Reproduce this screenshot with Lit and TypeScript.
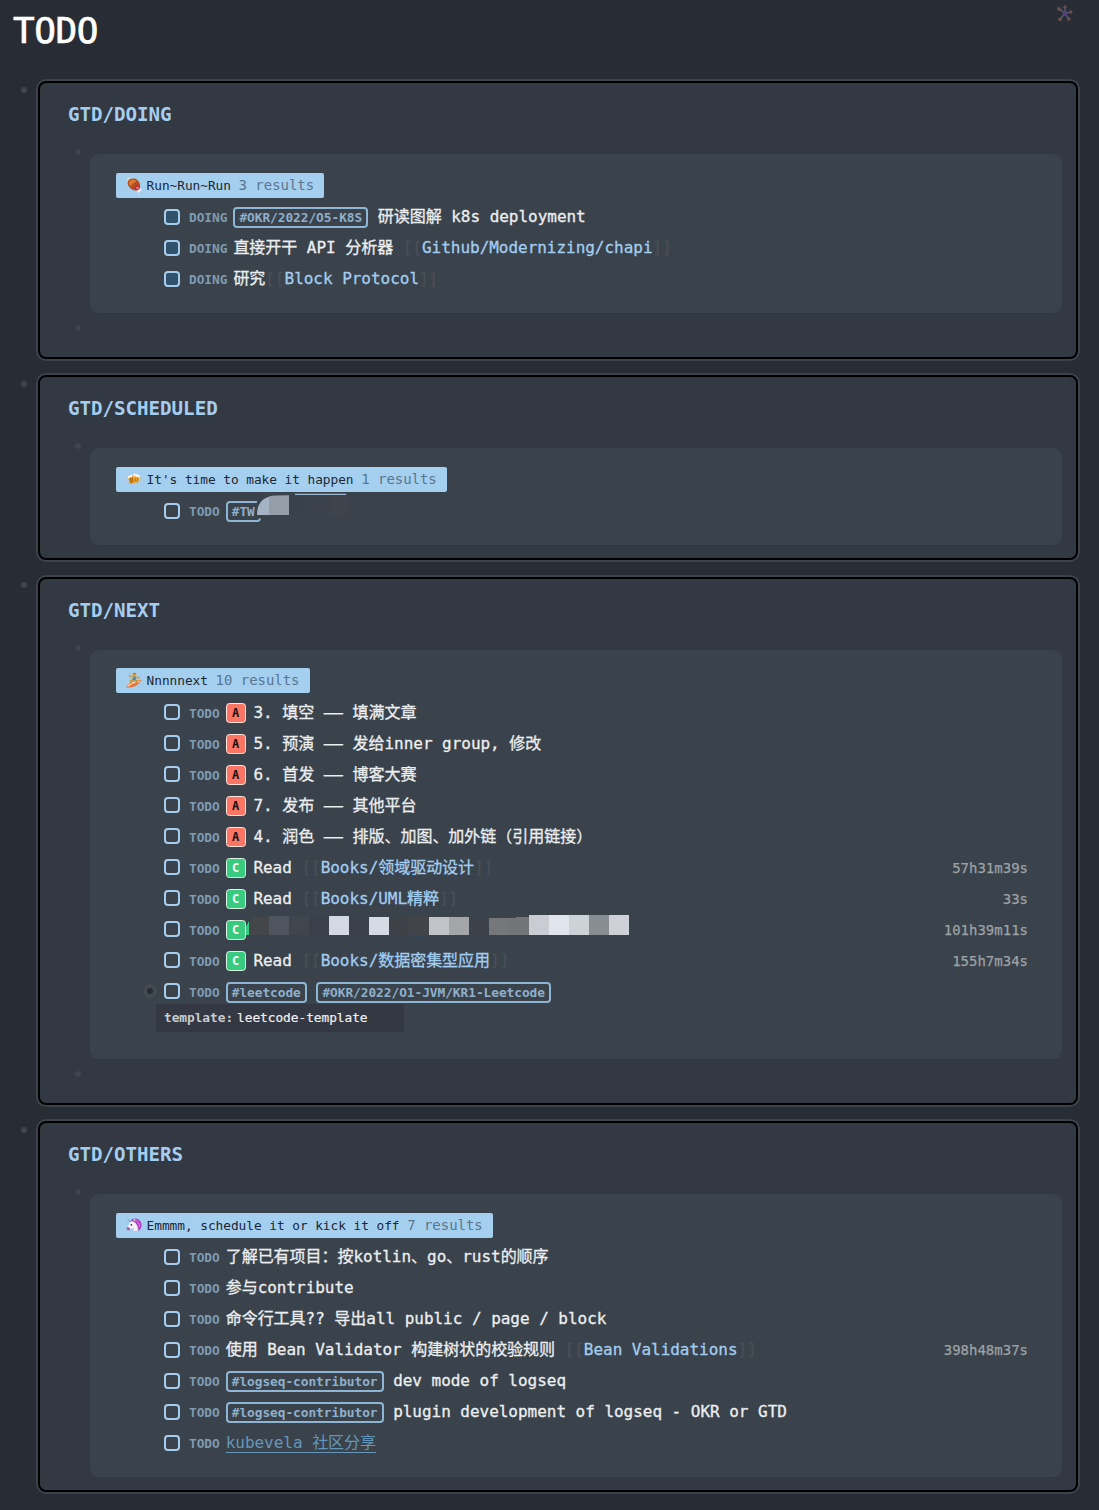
import { LitElement, html, css, svg, nothing, type TemplateResult } from "lit";
import { customElement, property } from "lit/decorators.js";

type Part =
  | { kind: "text" | "tag" | "ref" | "url"; text: string };

interface Task {
  state: "TODO" | "DOING";
  priority?: "A" | "C";
  parts: Part[];
  time?: string;
  mosaic?: "short" | "long";
  bullet?: boolean;
}

interface Section {
  title: string;
  icon: string;
  query: string;
  count: number;
  tasks: Task[];
  prop?: [string, string];
  trailing?: boolean;
  mod: string;
}

const t = (text: string): Part => ({ kind: "text", text });
const tag = (text: string): Part => ({ kind: "tag", text });
const ref = (text: string): Part => ({ kind: "ref", text });
const url = (text: string): Part => ({ kind: "url", text });

const SECTIONS: Section[] = [
  {
    title: "GTD/DOING", icon: "meat", query: "Run~Run~Run", count: 3, trailing: true, mod: "",
    tasks: [
      { state: "DOING", parts: [tag("#OKR/2022/O5-K8S"), t(" 研读图解 k8s deployment")] },
      { state: "DOING", parts: [t("直接开干 API 分析器 "), ref("Github/Modernizing/chapi")] },
      { state: "DOING", parts: [t("研究"), ref("Block Protocol")] },
    ],
  },
  {
    title: "GTD/SCHEDULED", icon: "beer", query: "It's time to make it happen", count: 1, mod: "spaced",
    tasks: [{ state: "TODO", parts: [tag("#TW")], mosaic: "short" }],
  },
  {
    title: "GTD/NEXT", icon: "surf", query: "Nnnnnext", count: 10, trailing: true, mod: "tight",
    prop: ["template:", "leetcode-template"],
    tasks: [
      { state: "TODO", priority: "A", parts: [t("3. 填空 —— 填满文章")] },
      { state: "TODO", priority: "A", parts: [t("5. 预演 —— 发给inner group, 修改")] },
      { state: "TODO", priority: "A", parts: [t("6. 首发 —— 博客大赛")] },
      { state: "TODO", priority: "A", parts: [t("7. 发布 —— 其他平台")] },
      { state: "TODO", priority: "A", parts: [t("4. 润色 —— 排版、加图、加外链（引用链接）")] },
      { state: "TODO", priority: "C", parts: [t("Read "), ref("Books/领域驱动设计")], time: "57h31m39s" },
      { state: "TODO", priority: "C", parts: [t("Read "), ref("Books/UML精粹")], time: "33s" },
      { state: "TODO", priority: "C", parts: [], time: "101h39m11s", mosaic: "long" },
      { state: "TODO", priority: "C", parts: [t("Read "), ref("Books/数据密集型应用")], time: "155h7m34s" },
      { state: "TODO", parts: [tag("#leetcode"), t(" "), tag("#OKR/2022/O1-JVM/KR1-Leetcode")], bullet: true },
    ],
  },
  {
    title: "GTD/OTHERS", icon: "unicorn", query: "Emmmm, schedule it or kick it off", count: 7, mod: "",
    tasks: [
      { state: "TODO", parts: [t("了解已有项目：按kotlin、go、rust的顺序")] },
      { state: "TODO", parts: [t("参与contribute")] },
      { state: "TODO", parts: [t("命令行工具?? 导出all public / page / block")] },
      { state: "TODO", parts: [t("使用 Bean Validator 构建树状的校验规则 "), ref("Bean Validations")], time: "398h48m37s" },
      { state: "TODO", parts: [tag("#logseq-contributor"), t(" dev mode of logseq")] },
      { state: "TODO", parts: [tag("#logseq-contributor"), t(" plugin development of logseq - OKR or GTD")] },
      { state: "TODO", parts: [url("kubevela 社区分享")] },
    ],
  },
];

const ICONS: Record<string, TemplateResult> = {
  meat: svg`
    <path d="M2.5 2.5 L13 13.5" stroke="#f0e4da" stroke-width="2"/>
    <circle cx="1.6" cy="2.6" r="1" fill="#e9d9cc"/><circle cx="2.8" cy="1.5" r="1" fill="#e9d9cc"/>
    <circle cx="14.2" cy="12.9" r="1.3" fill="#e6eaee"/><circle cx="12.7" cy="14.4" r="1.3" fill="#e6eaee"/>
    <path d="M1.8 4.8 C2.6 1.6 8.2 .4 11.4 3 C14.4 5.6 15 10.6 13 12.4 C10.4 14.6 6 13.2 3.6 10.4 C1.8 8.4 1.4 6.6 1.8 4.8Z" fill="#b4501f"/>
    <path d="M3.4 4.6 C5.2 2.2 9 2.2 10.6 4.4 C8.6 4.6 5.8 6.6 4.8 9.4 C3.2 7.8 2.6 6 3.4 4.6Z" fill="#dc7a32"/>
    <ellipse cx="11" cy="10.4" rx="3.2" ry="2.1" transform="rotate(-48 11 10.4)" fill="#c62f3c"/>
    <ellipse cx="11.5" cy="10.9" rx="1.1" ry=".8" fill="#f0b4ae"/>`,
  beer: svg`
    <path d="M2 6 L7 4.6 L9 11.6 L4 13Z" fill="#e28d17"/>
    <path d="M8 4.4 L13.6 5.6 L12 12 L7 10.8Z" fill="#eda52a"/>
    <path d="M2.4 7.4 C.2 8.2 1.2 11.4 3.4 10.8" fill="none" stroke="#dcc193" stroke-width="1"/>
    <path d="M13.4 7 C15.6 7.6 14.8 10.6 12.6 10" fill="none" stroke="#dcc193" stroke-width="1"/>
    <path d="M4.2 7.4 L5.2 11.8 M6 6.8 L7 11" stroke="#a45c0c" stroke-width=".9"/>
    <path d="M9.8 7 L9.2 10.6 M11.8 7.4 L11 11" stroke="#b66c10" stroke-width=".9"/>
    <circle cx="3" cy="6" r="1.3" fill="#fff3dd"/><circle cx="5.2" cy="5" r="1.3" fill="#fff8ea"/>
    <circle cx="8.6" cy="4" r="1.4" fill="#fff6e4"/><circle cx="11" cy="4.6" r="1.4" fill="#fffaf0"/><circle cx="13" cy="5.4" r="1.1" fill="#fff3dd"/>`,
  surf: svg`
    <path d="M.4 15.2 C2 10.4 9 7.6 15.2 8 C13.6 12.8 5.8 16.6 .4 15.2Z" fill="#e8703a"/>
    <path d="M1.8 14.2 C4.6 11.4 9.4 9.8 13.8 9.2" fill="none" stroke="#f9d9b0" stroke-width="1.4"/>
    <path d="M7.2 4.6 L10 4.2 L9.8 8.2 L6.6 8.4Z" fill="#55808c"/>
    <path d="M7 7.6 L4.6 9.2 L5.2 11.6 M9 7.8 L11 9.2 L9.8 11" fill="none" stroke="#c99238" stroke-width="1.8"/>
    <path d="M7.6 5.4 L4.4 4.6 L3 3 M9.6 5 L12.2 6 L14.2 5" fill="none" stroke="#d5a040" stroke-width="1.6"/>
    <circle cx="8.4" cy="2.6" r="1.9" fill="#d9a23c"/><path d="M6.6 2.2 Q8.2 .2 10.2 1.8Z" fill="#8a6a30"/>`,
  unicorn: svg`
    <path d="M.8 1 L5.4 5 L4 6Z" fill="#79a9b8"/>
    <path d="M4.6 3.6 C7.4 0 13.4 1 15 5.2 C16.2 8.4 15.2 12.6 12.4 14 C13 10.6 10.4 6 4.6 3.6Z" fill="#b13fc4"/>
    <path d="M7.4 2.6 C11 2.4 13.4 6 13.4 10" fill="none" stroke="#e583dd" stroke-width="1"/>
    <path d="M4 5.4 C6 3.6 9.6 5 10.6 7.8 C11.4 9.8 11.8 12 11 14 L6.8 13.8 C8 12.8 8.2 11.6 7.6 10.8 C6 11.2 4.6 12.6 2.6 13 C1 13.2 .4 11.6 1.2 10.4 C2.6 8.6 3 7 4 5.4Z" fill="#f6f2f6"/>
    <path d="M.6 11 C1.6 9.2 3.8 10 4.4 12.4 C2.8 14 .2 13.6 .6 11Z" fill="#a45cb4"/>
    <circle cx="5.4" cy="7.8" r=".85" fill="#3c2c44"/>
    <path d="M7.6 3.6 L8.6 2 L9.4 4.6Z" fill="#f6f2f6"/>`,
};

/* x, top, width, colour of each censor block; every block ends at y = 22 of the row */
const LONG: [number, number, number, string][] = [
  [3, 4, 20, "#454649"], [23, 3, 20, "#4f555f"], [43, 3, 20, "#3f464e"], [63, 4, 20, "#3a3f49"],
  [83, 3, 20, "#d3d9e3"], [103, 4, 20, "#3b414a"], [123, 4, 20, "#d5dae4"], [143, 4, 20, "#3e4147"],
  [163, 4, 20, "#434449"], [183, 4, 20, "#c0c3c8"], [203, 4, 20, "#a3a5a9"], [223, 4, 20, "#3b424a"],
  [243, 4, 20, "#75777b"], [263, 4, 20, "#727478"], [283, 2, 20, "#c9ccd2"], [303, 2, 20, "#dfe4ed"],
  [323, 2, 20, "#cdd1d8"], [343, 2, 20, "#878d92"], [363, 2, 20, "#ced2d8"],
];

@customElement("task-row")
export class TaskRow extends LitElement {
  static styles = css`
    :host { display: flex; position: relative; height: 31px; box-sizing: border-box; padding-left: 48px; white-space: pre; }
    .box { flex: none; width: 16px; height: 16px; margin-top: 8px; box-sizing: border-box; border: 2px solid #a7cdee; border-radius: 4px; }
    .box.doing { background: #30526b; }
    .state { margin-left: 9px; margin-right: 6px; margin-top: var(--nudge, 0px); font-size: 12.8px; font-weight: 700; line-height: 33px; color: #7f9bb3; letter-spacing: -0.03px; }
    .prio { flex: none; width: 20px; height: 20px; box-sizing: border-box; margin: 7px 7.7px 0 0; border: 1px solid #ffe3dd; border-radius: 3.5px;
      font-size: 12px; font-weight: 700; line-height: 18px; text-align: center; background: #fb7565; color: #14100f; }
    .prio.c { background: #38cb80; border-color: #d9f7e4; color: #f5fff8; }
    .text, .ref, .url { margin-top: var(--nudge, 0px); line-height: 31px; letter-spacing: -0.03px; -webkit-text-stroke: 0.3px currentColor; }
    .text { color: #eceef0; }
    .tag { height: 21px; box-sizing: border-box; margin-top: calc(6px + var(--nudge, 0px)); padding: 0 4px; border: 2px solid #8fb5d4; border-radius: 4px;
      font-size: 12.8px; font-weight: 700; line-height: 17px; color: #8fb0cc; letter-spacing: -0.03px; }
    .ref { color: #a3cdf0; }
    .br { color: #4a4f57; }
    .url { height: 25px; color: #6596ba; border-bottom: 1px solid #6596ba; -webkit-text-stroke-width: 0; }
    .time { margin-left: auto; margin-top: var(--nudge, 0px); font-size: 14px; line-height: 33px; color: #9da2a7; -webkit-text-stroke: 0.25px currentColor; }
    .dot { position: absolute; left: 27px; top: 9px; width: 14px; height: 14px; border-radius: 50%; background: #434950; }
    .dot::after { content: ""; position: absolute; left: 4px; top: 4px; width: 6px; height: 6px; border-radius: 50%; background: #272b33; }
    .mosaic { position: absolute; left: 130px; top: 0; width: 390px; height: 31px; overflow: visible; }
  `;

  @property({ attribute: false }) task!: Task;

  private part(p: Part) {
    if (p.kind === "tag") return html`<span class="tag">${p.text}</span>`;
    if (p.kind === "url") return html`<span class="url">${p.text}</span>`;
    if (p.kind === "ref")
      return html`<span class="ref"><span class="br">[[</span>${p.text}<span class="br">]]</span></span>`;
    return html`<span class="text">${p.text}</span>`;
  }

  private mosaic(kind: "short" | "long") {
    if (kind === "long")
      return html`<svg class="mosaic" viewBox="0 0 390 31" shape-rendering="crispEdges">
        <path d="M0 14 L3 8 V22 H0Z" fill="#38cb80"/>
        ${LONG.map(([x, y, w, c], i) =>
          i === 0
            ? svg`<path d="M3 22 V12 Q4 4 12 4 H23 V22Z" fill=${c}/>`
            : svg`<rect x=${x} y=${y} width=${w} height=${22 - y} fill=${c}/>`)}
        <path d="M243 2 H283 Q276 4.8 262 4.8 H243Z" fill="#3a434b"/>
        <rect x="161" y="22" width="20" height="5" fill="#36475a" opacity=".45"/>
      </svg>`;
    return html`<svg class="mosaic" viewBox="0 0 390 31">
      <rect x="11" y="5" width="8" height="18.5" fill="#3a434b"/>
      <path d="M11 20 Q11 3 27 1 V20Z" fill="#a4b4c4"/>
      <path d="M23 1.4 Q28 .3 43 .3 V20 H23Z" fill="#959da8"/>
      <rect x="43" y="1" width="20" height="19" fill="#39414a"/>
      <rect x="63" y="1" width="20" height="19" fill="#3c424b"/>
      <rect x="83" y="1" width="20" height="19" fill="#3f434c"/>
      <path d="M49 -.6 H100" stroke="#9fbcd4" stroke-width="1.1"/>
    </svg>`;
  }

  render() {
    const k = this.task;
    return html`
      ${k.bullet ? html`<span class="dot"></span>` : nothing}
      <span class="box ${k.state.toLowerCase()}"></span>
      <span class="state">${k.state}</span>
      ${k.priority ? html`<span class="prio ${k.priority.toLowerCase()}">${k.priority}</span>` : nothing}
      ${k.parts.map((p) => this.part(p))}
      ${k.mosaic ? this.mosaic(k.mosaic) : nothing}
      ${k.time ? html`<span class="time">${k.time}</span>` : nothing}
    `;
  }
}

@customElement("app-root")
export class AppRoot extends LitElement {
  static styles = css`
    :host { display: block; position: relative; box-sizing: border-box; min-height: 1510px; background: #282c35;
      font-family: "DejaVu Sans Mono", "Noto Sans CJK SC", monospace; font-size: 16px; color: #eceef0; }
    .title { margin: 0; height: 81px; padding: 8px 0 0 13px; box-sizing: border-box; font-size: 36px; font-weight: 400; line-height: 46px;
      color: #fff; letter-spacing: -0.4px; -webkit-text-stroke: 0.7px currentColor; }
    .star { position: absolute; left: 1056px; top: 5px; width: 17px; height: 17px; }
    .block { display: grid; grid-template-columns: 38px 1040px; margin-bottom: 16px; }
    .block.spaced { margin-bottom: 17px; }
    .bullet { width: 6px; height: 6px; border-radius: 50%; background: #40454e; margin: 6px 0 0 21px; }
    .card { box-sizing: border-box; padding: 0 14px 13px 28px; border: 2px solid #000; border-radius: 8px; background: #333943; box-shadow: 0 0 0 2px #3d434b; }
    .card h2 { margin: 0; height: 66px; padding-top: 18px; box-sizing: border-box; font-size: 19.2px; line-height: 27px; font-weight: 700;
      color: #a5cdef; letter-spacing: -0.04px; }
    .child { display: grid; grid-template-columns: 22px 1fr; }
    .inner { width: 6px; height: 6px; border-radius: 50%; background: #3d444c; margin: 0 0 0 7px; }
    .panel { margin-top: 5px; padding: 19px 34px 19px 26px; border-radius: 9px; background: #3a434b; }
    .tight { --nudge: 1px; }
    .tight .bullet { margin-top: 5px; }
    .tight .panel { padding: 18px 34px 27px 26px; }
    .badge { display: flex; width: max-content; height: 25px; padding: 0 10px; margin-bottom: 3px; border-radius: 2px; background: #a5cfef;
      font-size: 12.8px; line-height: 25px; color: #1c2733; letter-spacing: -0.04px; white-space: pre; }
    .emoji { width: 16px; height: 16px; margin: 4px 4.6px 0 0; }
    .count { font-size: 14px; color: #587690; }
    .prop { display: flex; gap: 4px; width: 248px; height: 28px; box-sizing: border-box; margin: -2px 0 0 40px; padding-left: 8px; background: #333842;
      font-size: 12.8px; line-height: 27px; letter-spacing: -0.03px; color: #eef0f2; -webkit-text-stroke: 0.2px currentColor; }
    .key { font-weight: 700; color: #c9cccf; -webkit-text-stroke-width: 0; }
    .tail { height: 31px; padding-top: 12px; box-sizing: border-box; }
  `;

  private section(s: Section) {
    return html`<section class="block ${s.mod}">
      <div class="bullet"></div>
      <div class="card">
        <h2>${s.title}</h2>
        <div class="child">
          <div class="inner"></div>
          <div class="panel">
            <div class="badge"><svg class="emoji" viewBox="0 0 16 16">${ICONS[s.icon]}</svg><span>${s.query} </span><span class="count">${s.count} results</span></div>
            ${s.tasks.map((k) => html`<task-row .task=${k}></task-row>`)}
            ${s.prop ? html`<div class="prop"><span class="key">${s.prop[0]}</span><span>${s.prop[1]}</span></div>` : nothing}
          </div>
        </div>
        ${s.trailing ? html`<div class="tail"><div class="inner"></div></div>` : nothing}
      </div>
    </section>`;
  }

  render() {
    return html`
      <h1 class="title">TODO</h1>
      <svg class="star" viewBox="0 0 17 17">
        <path d="M9 8.2 L3.2 4 M9 8.2 V1.8 M9 8.2 L14.8 7 M9 8.2 L12.6 14 M9 8.2 L4 14.4" stroke="#55586c" stroke-width="1.6"/>
        <g fill="#6b4f4a"><circle cx="3" cy="4" r="1.9"/><circle cx="9" cy="2" r="1.7"/><circle cx="14.8" cy="7" r="1.7"/><circle cx="12.8" cy="14" r="1.8"/><circle cx="4" cy="14.4" r="1.8"/></g>
        <circle cx="9" cy="8.3" r="2.4" fill="#583f7c"/>
      </svg>
      ${SECTIONS.map((s) => this.section(s))}
    `;
  }
}
